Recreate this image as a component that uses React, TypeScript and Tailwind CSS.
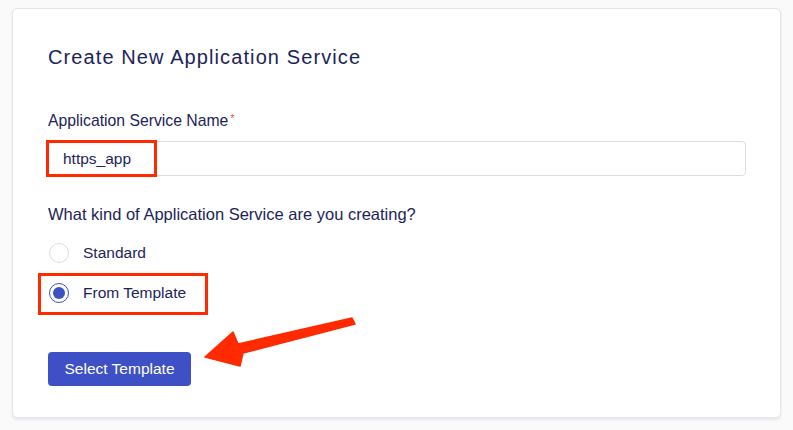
import React from 'react';

function Radio({ checked }: { checked?: boolean }) {
  return (
    <span
      className={
        'flex h-[20px] w-[20px] items-center justify-center rounded-full border bg-white ' +
        (checked ? 'border-[#3d50c6]' : 'border-[#dcdce4]')
      }
    >
      {checked && <span className="h-[12px] w-[12px] rounded-full bg-[#3d50c6]" />}
    </span>
  );
}

function Arrow() {
  return (
    <svg className="absolute left-[200px] top-[314px]" width="160" height="56" viewBox="200 314 160 56">
      <polygon
        points="205,357 233,332 238,344 352,318 355,324 243,353 240,366"
        fill="#ff2a00"
        stroke="#ff2a00"
        strokeWidth="1.5"
        strokeLinejoin="round"
      />
    </svg>
  );
}

export default function App() {
  return (
    <div
      className="relative min-h-[430px] w-[793px] bg-[#fafafb] pl-[12px] pr-[12px] pt-[8px]"
      style={{ fontFamily: '"Liberation Sans", Arial, sans-serif' }}
    >
      <div className="h-[410px] w-[769px] rounded-[5px] border border-[#e4e4ec] bg-white pl-[35px] pt-[36px] shadow-[0_2px_3px_rgba(30,30,60,0.08)]">
        <h1 className="text-[20px] leading-[24px] tracking-[1.1px] text-[#1c2457]">
          Create New Application Service
        </h1>

        <label className="mt-[43px] block text-[15.75px] leading-[18px] text-[#1c2457]">
          Application Service Name<span className="ml-[2px] align-top text-[11px] leading-[12px] text-[#f0533f]">*</span>
        </label>

        <div className="relative mt-[11px] w-[698px]">
          <div className="flex h-[35px] items-center rounded-[4px] border border-[#dcdce4] bg-white pl-[14px] text-[15.5px] text-[#1c2457]">
            https_app
          </div>
          <div className="absolute left-[-2px] top-[-1px] h-[37px] w-[111px] border-[3px] border-[#ff2a00]" />
        </div>

        <p className="mt-[29px] text-[16.5px] leading-[18px] text-[#1c2457]">
          What kind of Application Service are you creating?
        </p>

        <div className="mt-[20px] flex flex-col gap-[20px]">
          <div className="flex h-[20px] items-center gap-[14px] pl-[1px]">
            <Radio />
            <span className="text-[15.5px] text-[#1c2457]">Standard</span>
          </div>
          <div className="relative flex h-[20px] items-center gap-[14px] pl-[1px]">
            <Radio checked />
            <span className="text-[15.5px] text-[#1c2457]">From Template</span>
            <div className="absolute left-[-10px] top-[-10px] h-[42px] w-[170px] border-[3px] border-[#ff2a00]" />
          </div>
        </div>

        <button className="mt-[49px] h-[34px] w-[143px] rounded-[4px] bg-[#3d50c6] text-[15.5px] text-white">
          Select Template
        </button>
      </div>
      <Arrow />
    </div>
  );
}
